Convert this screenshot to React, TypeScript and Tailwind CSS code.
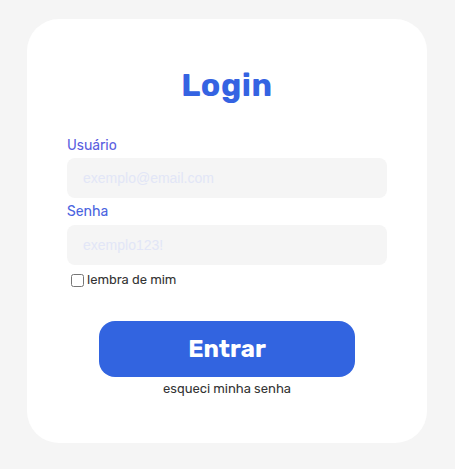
export default function App() {
  return (
    <div className="min-h-screen bg-[#f5f5f5] pl-[27px] pt-[19px] font-['Rubik','Inter',sans-serif]">
      <div className="flex h-[424px] w-[400px] flex-col rounded-[32px] bg-white px-10 pt-[46px]">
        <h1 className="text-center text-[32px] font-bold leading-[40px] tracking-[0.6px] text-[#3563e2]">
          Login
        </h1>

        <label className="mt-[31px] block text-[14px] leading-[20px] text-[#5a5ee0]">Usuário</label>
        <input
          type="text"
          placeholder="exemplo@email.com"
          className="mt-[2px] h-10 w-full rounded-lg bg-[#f5f5f5] px-4 font-['Liberation_Sans',Arial,sans-serif] text-[14px] outline-none placeholder:text-[#e2e6f7]"
        />

        <label className="mt-1 block text-[14px] leading-[20px] text-[#4a63e0]">Senha</label>
        <input
          type="password"
          placeholder="exemplo123!"
          className="mt-[3px] h-10 w-full rounded-lg bg-[#f5f5f5] px-4 font-['Liberation_Sans',Arial,sans-serif] text-[14px] outline-none placeholder:text-[#e2e6f7]"
        />

        <label className="mt-[7px] flex h-4 items-center gap-[3px] pl-1 text-[13px] text-[#333]">
          <input type="checkbox" className="m-0 h-[13px] w-[13px]" />
          lembra de mim
        </label>

        <button className="mx-auto mt-[33px] h-14 w-64 rounded-2xl bg-[#3264e0] text-[24px] font-bold text-white">
          Entrar
        </button>
        <p className="mt-1 text-center text-[13px] leading-[16px] text-[#333]">esqueci minha senha</p>
      </div>
    </div>
  )
}
